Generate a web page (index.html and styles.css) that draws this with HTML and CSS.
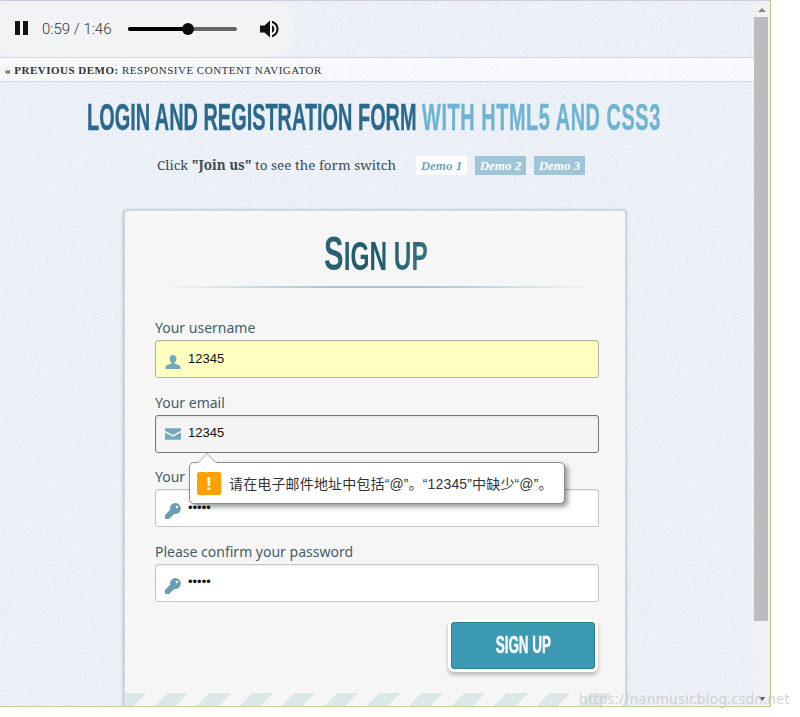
FILE: index.html
```html
<!DOCTYPE html>
<html lang="en">
<head>
    <meta charset="UTF-8">
    <meta name="viewport" content="width=device-width, initial-scale=1.0">
    <title>Login and Registration Form with HTML5 and CSS3</title>
    <link rel="stylesheet" href="styles.css">
</head>
<body>
  <div class="window">
    <div class="page">
      <svg class="linen" width="100%" height="100%"><filter id="linen-noise"><feTurbulence type="fractalNoise" baseFrequency="0.8 0.95" numOctaves="2" seed="4"/><feColorMatrix values="0 0 0 0 1  0 0 0 0 1  0 0 0 0 1  1.6 0 0 0 -0.55"/></filter><rect width="100%" height="100%" filter="url(#linen-noise)"/></svg>

      <div class="player">
        <svg class="pause" width="14" height="16" viewBox="0 0 14 16"><path d="M0 1h5v14H0zM8 1h5v14H8z" fill="#111"/></svg>
        <span class="time">0:59 / 1:46</span>
        <div class="track"><div class="track-fill"><span class="knob"></span></div></div>
        <svg class="volume" width="20" height="20" viewBox="0 0 20 20"><path d="M0 6.500h4.500L10 1.500v17l-5.500-5H0z" fill="#111"/><path d="M12 6.300c1.500.8 2.300 2.100 2.300 3.700s-.8 2.900-2.300 3.700z" fill="#111"/><path d="M12 1.800c3.900 1 6.500 4.200 6.500 8.200s-2.600 7.200-6.500 8.200v-2.100c2.700-.9 4.500-3.300 4.500-6.100s-1.800-5.200-4.500-6.100z" fill="#111"/></svg>
      </div>

      <div class="topbar"><b>&laquo; Previous Demo:</b> Responsive Content Navigator</div>

      <h1 class="title"><span>Login and Registration Form <em>with HTML5 and CSS3</em></span></h1>

      <div class="switch">
        <p>Click <b>"Join us"</b> to see the form switch</p>
        <a class="demo current">Demo 1</a>
        <a class="demo">Demo 2</a>
        <a class="demo">Demo 3</a>
      </div>

      <div class="card">
        <h2><span>Sign up</span></h2>
        <div class="rule"></div>

        <div class="form-group">
          <label>Your username</label>
          <div class="field autofill">
            <svg class="icon-user" width="16" height="14" viewBox="0 0 17 15"><path d="M8.500 0c2.300 0 3.700 1.700 3.700 4 0 1.700-.8 3.200-2 4v1.300c2.500.6 5.300 1.500 6.300 3V15H.5v-2.700c1-1.500 3.800-2.400 6.300-3V8c-1.200-.8-2-2.300-2-4 0-2.300 1.400-4 3.700-4z" fill="#74a8bd"/></svg>
            <input type="text" value="12345">
          </div>
        </div>

        <div class="form-group">
          <label>Your email</label>
          <div class="field focused">
            <svg class="icon-mail" width="16" height="12" viewBox="0 0 17 12"><path d="M0 0h17v2.500L8.500 7 0 2.500z" fill="#74a8bd"/><path d="M0 4.500l8.500 4.500L17 4.500V12H0z" fill="#74a8bd"/></svg>
            <input type="text" value="12345">
          </div>
        </div>

        <div class="form-group">
          <label>Your password</label>
          <div class="field">
            <svg class="icon-key" width="16" height="16" viewBox="0 0 16 16"><path d="M10.500 0a5.500 5.500 0 1 1-1.200 10.900L4 16H0v-4l5.200-5.200A5.500 5.500 0 0 1 10.500 0zm1.500 2.800a1.200 1.200 0 1 0 0 2.400 1.200 1.200 0 0 0 0-2.400z" fill="#6a9fb3" fill-rule="evenodd"/></svg>
            <input type="password" value="12345">
          </div>
        </div>

        <div class="form-group">
          <label>Please confirm your password</label>
          <div class="field">
            <svg class="icon-key" width="16" height="16" viewBox="0 0 16 16"><path d="M10.500 0a5.500 5.500 0 1 1-1.200 10.900L4 16H0v-4l5.200-5.200A5.500 5.500 0 0 1 10.500 0zm1.500 2.800a1.200 1.200 0 1 0 0 2.400 1.200 1.200 0 0 0 0-2.400z" fill="#6a9fb3" fill-rule="evenodd"/></svg>
            <input type="password" value="12345">
          </div>
        </div>

        <div class="actions"><button type="button"><span>Sign up</span></button></div>
        <div class="stripes"></div>
      </div>

      <div class="tooltip">
        <span class="warn">!</span>
        <span>请在电子邮件地址中包括“@”。“12345”中缺少“@”。</span>
      </div>
    </div>

    <div class="scrollbar">
      <span class="arrow-up"></span>
      <div class="thumb"></div>
      <span class="arrow-down"></span>
    </div>
  </div>
  <div class="watermark">https://nanmusir.blog.csdn.net</div>
</body>
</html>
```

FILE: styles.css
```css
html, body {
    margin: 0;
    height: 100%;
    background: #fff;
    overflow: hidden;
}

body {
    font-family: "Noto Sans", sans-serif;
}

.window {
    width: 771px;
    height: 707px;
    box-sizing: border-box;
    display: flex;
    border-top: 1px solid #ccd;
    border-right: 1px solid #b9c28f;
    border-bottom: 1px solid #c6cd9e;
    overflow: hidden;
}

.page {
    position: relative;
    isolation: isolate;
    flex: 1;
    min-width: 0;
    overflow: hidden;
    background-color: #e5ebf4;
}

.linen {
    position: absolute;
    left: 0;
    top: 0;
    z-index: -1;
}

/* audio player */
.player {
    width: 307px;
    height: 56px;
    margin-left: -12px;
    padding-left: 27px;
    box-sizing: border-box;
    display: flex;
    align-items: center;
    background: #f1f3f4;
    border-radius: 28px;
}

.pause {
    margin-top: -2px;
}

.time {
    margin-left: 13px;
    width: 86px;
    font-family: Roboto, sans-serif;
    font-size: 15px;
    font-weight: 300;
    color: #333;
    white-space: nowrap;
}

.track {
    width: 109px;
    height: 4px;
    border-radius: 2px;
    background: #666;
}

.track-fill {
    position: relative;
    width: 60px;
    height: 4px;
    border-radius: 2px;
    background: #000;
}

.knob {
    position: absolute;
    right: -6px;
    top: -4px;
    width: 12px;
    height: 12px;
    border-radius: 50%;
    background: #0c0c0c;
}

.volume {
    margin-left: 23px;
}

.topbar {
    height: 25px;
    box-sizing: border-box;
    padding-left: 5px;
    line-height: 24px;
    background: rgba(255,255,255,0.55);
    border-top: 1px solid #d3d7e2;
    border-bottom: 1px solid #d3d7e2;
    font-family: "Liberation Serif", serif;
    font-size: 11px;
    letter-spacing: 0.5px;
    text-transform: uppercase;
    color: #333;
    white-space: nowrap;
}

.title {
    margin: 0;
    padding: 18px 0 0 87px;
    height: 45px;
    line-height: 36px;
    font-family: "Liberation Sans", sans-serif;
    font-size: 36px;
    font-weight: bold;
    text-transform: uppercase;
    color: #2a688c;
    white-space: nowrap;
    -webkit-text-stroke: 0.4px;
}

.title span {
    display: inline-block;
    transform: scaleX(0.553);
    transform-origin: left center;
}

.title em {
    font-style: normal;
    letter-spacing: 1px;
    color: #6eb3d2;
}

.switch {
    margin-top: 11px;
    padding-left: 157px;
    height: 19px;
    display: flex;
    align-items: center;
}

.switch p {
    margin: 0 20px 2px 0;
    font-family: "Noto Serif", "DejaVu Serif", serif;
    font-size: 13.450px;
    color: #3d4a50;
    white-space: nowrap;
}

.demo {
    width: 51px;
    height: 19px;
    margin-right: 8px;
    line-height: 19px;
    text-align: center;
    background: #9fc5d8;
    color: #fff;
    font-family: "Liberation Serif", serif;
    font-size: 13px;
    font-weight: bold;
    font-style: italic;
}

.demo.current {
    background: #fff;
    color: #6ea8c0;
}

/* form card */
.card {
    position: relative;
    width: 502px;
    height: 520px;
    box-sizing: border-box;
    margin: 35px 0 0 124px;
    padding: 0 26px 0 30px;
    background: #f6f6f6;
    border: 1px solid #cfdbe0;
    border-radius: 4px;
    box-shadow: -1px 0 3px rgba(120,140,160,0.5), 1px 0 2px rgba(120,140,160,0.3);
}

.card h2 {
    margin: 0 2px 0 0;
    padding-top: 22px;
    height: 41px;
    line-height: 41px;
    text-align: center;
    font-family: "Liberation Sans", sans-serif;
    font-size: 40px;
    font-weight: bold;
    text-transform: uppercase;
}

.card h2 span {
    display: inline-block;
    transform: scaleX(0.61);
    background: linear-gradient(120deg, #2f6575, #1f5a68 50%, #3a7486);
    -webkit-background-clip: text;
    background-clip: text;
    color: transparent;
}

.card h2 span::first-letter {
    font-size: 48px;
}

.rule {
    height: 2px;
    margin: 12px 4px 26px 5px;
    background: linear-gradient(90deg, transparent, #a9c3cd 40%, #a9c3cd 60%, transparent);
}

.form-group {
    margin-bottom: 10.670px;
}

label {
    display: block;
    height: 26px;
    line-height: 27px;
    font-size: 14px;
    color: #3f5f66;
}

.field {
    height: 38px;
    box-sizing: border-box;
    display: flex;
    align-items: center;
    padding-left: 9px;
    background: #fff;
    border: 1px solid #c4c4c4;
    border-radius: 3px;
    box-shadow: inset 0 1px 2px rgba(0,0,0,0.08);
}

.field svg {
    flex: none;
}

.icon-user {
    margin-top: 5px;
}

.icon-key {
    margin-top: 6px;
}

.field input {
    flex: 1;
    min-width: 0;
    margin: 0 0 2px 7px;
    padding: 0;
    border: none;
    outline: none;
    background: transparent;
    font-family: "Liberation Sans", Arial, sans-serif;
    font-size: 13px;
    color: #111;
}

.field.autofill {
    background: #ffffc0;
    border-color: #b4b4a8;
}

.field.focused {
    background: #f4f4f4;
    border-color: #777;
}

.actions {
    display: flex;
    justify-content: flex-end;
    padding: 6px 1px 0 0;
}

button {
    width: 150px;
    height: 53px;
    padding: 0;
    background: #3d9ab3;
    background-clip: padding-box;
    border: 3px solid #fff;
    border-radius: 6px;
    outline: none;
    box-shadow: inset 0 0 0 1px #2f7d92, 0 3px 4px rgba(0,0,0,0.25);
    color: #fff;
    font-family: "Liberation Sans", sans-serif;
    font-size: 24px;
    font-weight: bold;
    text-transform: uppercase;
    -webkit-text-stroke: 0.4px;
}

button span {
    display: inline-block;
    transform: scaleX(0.56);
}

.stripes {
    position: absolute;
    left: 0;
    right: 0;
    top: 482px;
    height: 14px;
    background: repeating-linear-gradient(135deg, #dce8e8 0 15px, #f6f6f6 15px 30px);
}

/* browser validation bubble */
.tooltip {
    position: absolute;
    left: 189px;
    top: 461px;
    width: 376px;
    height: 42px;
    box-sizing: border-box;
    display: flex;
    align-items: center;
    padding-left: 7px;
    background: #fff;
    border: 1px solid #8a8a8a;
    border-radius: 5px;
    box-shadow: 3px 3px 5px rgba(0,0,0,0.4);
    font-family: "Liberation Sans", "Noto Sans CJK SC", sans-serif;
    font-size: 14px;
    letter-spacing: 0.15px;
    color: #333;
    white-space: nowrap;
}

.tooltip::before {
    content: "";
    position: absolute;
    left: 10px;
    top: -7px;
    width: 13px;
    height: 13px;
    background: #fff;
    border-left: 1px solid #bbb;
    border-top: 1px solid #bbb;
    transform: rotate(45deg);
}

.warn {
    flex: none;
    width: 24px;
    height: 23px;
    margin-right: 8px;
    border-radius: 2px;
    background: #ffa000;
    color: #fff;
    font-size: 19px;
    font-weight: bold;
    line-height: 23px;
    text-align: center;
}

.scrollbar {
    flex: none;
    width: 16px;
    display: flex;
    flex-direction: column;
    align-items: center;
    background: #f1f1f1;
}

.arrow-up {
    margin: 7px 0 5px;
    border-left: 4px solid transparent;
    border-right: 4px solid transparent;
    border-bottom: 4px solid #888;
}

.thumb {
    align-self: flex-start;
    width: 14px;
    height: 604px;
    background: #bcbcbc;
}

.arrow-down {
    margin-top: auto;
    margin-bottom: 5px;
    border-left: 3px solid transparent;
    border-right: 3px solid transparent;
    border-top: 4px solid #444;
}

.watermark {
    position: absolute;
    left: 579px;
    top: 689px;
    font-family: "Noto Sans", sans-serif;
    font-size: 14px;
    letter-spacing: 0.3px;
    color: rgba(200,200,200,0.8);
    white-space: nowrap;
}
```
